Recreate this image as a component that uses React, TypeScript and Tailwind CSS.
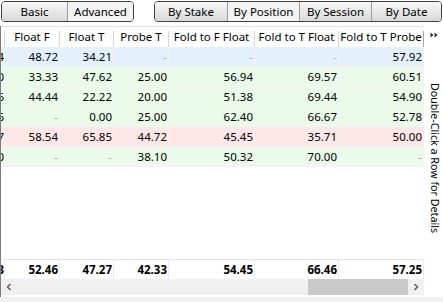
import React from "react";

type Cell = string | null;

const widths = ["w-[4px]", "w-[55px]", "w-[54px]", "w-[55px]", "w-[86px]", "w-[84px]", "w-[85px]"];

const headers = ["", "Float F", "Float T", "Probe T", "Fold to F Float", "Fold to T Float", "Fold to T Probe"];

const rows: { bg: string; cells: Cell[] }[] = [
  { bg: "bg-[#e4f1fc]", cells: ["41.54", "48.72", "34.21", null, null, null, "57.92"] },
  { bg: "bg-[#eafbea]", cells: ["50.00", "33.33", "47.62", "25.00", "56.94", "69.57", "60.51"] },
  { bg: "bg-[#eafbea]", cells: ["45.16", "44.44", "22.22", "20.00", "51.38", "69.44", "54.90"] },
  { bg: "bg-[#eafbea]", cells: ["52.86", null, "0.00", "25.00", "62.40", "66.67", "52.78"] },
  { bg: "bg-[#ffe7e7]", cells: ["48.27", "58.54", "65.85", "44.72", "45.45", "35.71", "50.00"] },
  { bg: "bg-[#eafbea]", cells: ["40.00", null, null, "38.10", "50.32", "70.00", null] },
];

const totals = ["49.93", "52.46", "47.27", "42.33", "54.45", "66.46", "57.25"];

const Btn = ({ label, active, w, last }: { label: string; active?: boolean; w: string; last?: boolean }) => (
  <div
    className={`${w} h-full flex items-center justify-center text-[11.5px] text-black ${last ? "" : "border-r border-[#9c9c9c]"} ${
      active ? "bg-[#f3f3f3]" : "bg-gradient-to-b from-[#f7f7f7] to-[#d9d9d9]"
    }`}
  >
    {label}
  </div>
);

const Value = ({ v }: { v: Cell }) =>
  v === null ? <span className="text-[#a9a9a9]">-</span> : <span>{v}</span>;

export default function App() {
  return (
    <div className="w-[443px] h-[302px] bg-white overflow-hidden flex flex-col font-['Noto_Sans','Open_Sans',sans-serif] text-black select-none">
      {/* toolbar */}
      <div className="h-[26px] flex pl-[1px] pt-[1px]">
        <div className="w-[133px] h-[21px] flex rounded-[4px] border border-[#404040] overflow-hidden">
          <Btn label="Basic" w="w-[66px]" />
          <Btn label="Advanced" active w="flex-1" last />
        </div>
        <div className="ml-[20px] w-[288px] h-[21px] flex rounded-[4px] border border-[#404040] overflow-hidden">
          <Btn label="By Stake" w="w-[73px]" />
          <Btn label="By Position" active w="w-[72px]" />
          <Btn label="By Session" w="w-[72px]" />
          <Btn label="By Date" w="flex-1" last />
        </div>
      </div>

      <div className="flex flex-1 min-h-0">
        {/* grid */}
        <div className="w-[424px] flex flex-col border-l border-[#7d7d7d]">
          <div className="h-[21px] flex border-t border-[#e2e2e2] bg-white shrink-0">
            {headers.map((h, i) => (
              <div key={i} className={`${widths[i]} flex items-center shrink-0 overflow-hidden`}>
                <div className="flex-1 text-center text-[11.5px] whitespace-nowrap">{h}</div>
                <div className={`w-px h-[16px] self-end ${i === 6 ? "bg-[#a8a8a8]" : "bg-[#d6d6d6]"}`} />
              </div>
            ))}
          </div>

          {rows.map((r, ri) => (
            <div key={ri} className={`h-[20px] flex shrink-0 ${r.bg}`}>
              {r.cells.map((c, ci) => (
                <div
                  key={ci}
                  className={`${widths[ci]} shrink-0 flex items-center justify-end overflow-hidden whitespace-nowrap text-[11.5px] border-r border-b border-[#f3f3f3] ${
                    ci === 0 ? "pr-0" : "pr-[1px]"
                  }`}
                >
                  <Value v={c} />
                </div>
              ))}
            </div>
          ))}

          <div className="flex-1" />

          <div className="h-[20px] flex shrink-0 border-t border-[#e4e4e4]">
            {totals.map((t, i) => (
              <div
                key={i}
                className={`${widths[i]} shrink-0 flex items-center justify-end overflow-hidden whitespace-nowrap text-[11.5px] font-bold border-r border-[#ececec] ${
                  i === 0 ? "pr-0" : "pr-[1px]"
                }`}
              >
                {t}
              </div>
            ))}
          </div>

          {/* horizontal scrollbar */}
          <div className="h-[16px] flex shrink-0 bg-[#f0f0f0]">
            <div className="w-[16px] flex items-center justify-center">
              <svg width="6" height="8" viewBox="0 0 6 8">
                <path d="M4.5 1 L1.5 4 L4.5 7" fill="none" stroke="#606060" strokeWidth="1.5" />
              </svg>
            </div>
            <div className="flex-1 flex justify-end">
              <div className="w-[100px] h-full bg-[#c9c9c9]" />
            </div>
            <div className="w-[16px] flex items-center justify-center">
              <svg width="6" height="8" viewBox="0 0 6 8">
                <path d="M1.5 1 L4.5 4 L1.5 7" fill="none" stroke="#606060" strokeWidth="1.5" />
              </svg>
            </div>
          </div>
          <div className="h-[2px] shrink-0" />
        </div>

        {/* right strip */}
        <div className="flex-1 flex flex-col items-center">
          <svg className="mt-[6px] ml-[2px]" width="9" height="6" viewBox="0 0 9 6">
            <path d="M0.5 0.5 L3.5 3 L0.5 5.5 Z" fill="#303030" />
            <path d="M4.5 0.5 L7.5 3 L4.5 5.5 Z" fill="#303030" />
          </svg>
          <div className="mt-[45px] [writing-mode:vertical-rl] text-[10.7px] whitespace-nowrap leading-none ml-[2px]">
            Double-Click a Row for Details
          </div>
        </div>
      </div>

      <div className="h-[5px] shrink-0 bg-[#f0f0f0]" />
    </div>
  );
}
